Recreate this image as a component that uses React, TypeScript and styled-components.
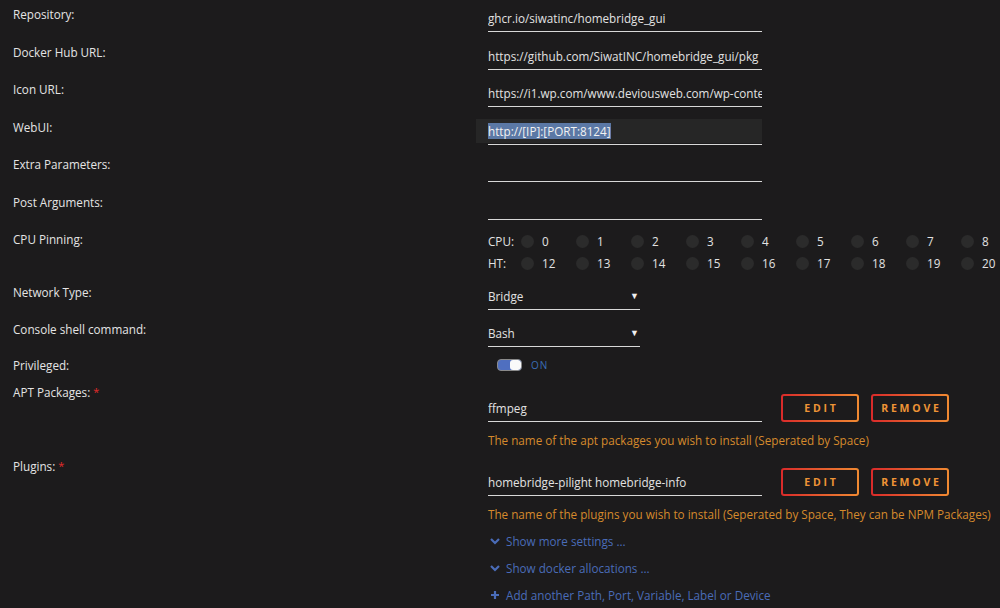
import React from 'react';
import styled, { createGlobalStyle, css } from 'styled-components';

const GlobalStyle = createGlobalStyle`
  html, body {
    margin: 0;
    padding: 0;
    background: #1c1b1c;
  }
  body {
    font-family: "Open Sans", "Noto Sans", sans-serif;
    font-size: 11.7px;
    color: #e2e2e2;
    overflow: hidden;
  }
`;

const Page = styled.div`
  width: 1000px;
  height: 608px;
  padding: 5px 0 0 13px;
  box-sizing: border-box;
  overflow: hidden;
`;

type RowProps = { gap?: number };
const Row = styled.div<RowProps>`
  display: flex;
  align-items: flex-start;
  margin-bottom: ${({ gap }) => (gap === undefined ? 10.5 : gap)}px;
`;

const Label = styled.div`
  width: 475px;
  flex: none;
  line-height: 18px;
  color: #e4e4e4;
`;

const Req = styled.span`
  color: #e22b2b;
  font-size: 11px;
  margin-left: 3px;
  vertical-align: top;
`;

type ValueProps = { top?: number };
const Value = styled.div<ValueProps>`
  flex: 1;
  min-width: 0;
  padding-top: ${({ top }) => top || 0}px;
`;

type InputProps = { focused?: boolean; w?: number };
const Input = styled.div<InputProps>`
  position: relative;
  width: ${({ w }) => w || 274}px;
  height: 27px;
  padding-top: 4px;
  box-sizing: border-box;
  line-height: 18px;
  border-bottom: 1px solid #d8d8d8;
  white-space: nowrap;
  color: #e2e2e2;
  ${({ focused }) =>
    focused &&
    css`
      &::before {
        content: '';
        position: absolute;
        left: -12px;
        right: 0;
        top: 1px;
        bottom: 1px;
        background: #262626;
      }
    `}
`;

const Clip = styled.span`
  position: relative;
  display: block;
  overflow: hidden;
`;

const Selected = styled.span`
  background: #5b78a5;
  color: #f2f2f2;
`;

const Select = styled(Input)`
  width: 152px;
  display: flex;
  justify-content: space-between;
  padding-right: 1px;
`;

const Caret = styled.span`
  font-size: 9px;
  color: #f0f0f0;
`;

const PinGrid = styled.div`
  display: flex;
  flex-direction: column;
`;

const PinRow = styled.div`
  display: flex;
  align-items: center;
  height: 22px;
`;

const PinHead = styled.span`
  width: 33px;
  flex: none;
`;

const Pin = styled.span`
  width: 55px;
  flex: none;
  display: flex;
  align-items: center;
  gap: 8px;
`;

const Dot = styled.span`
  width: 13px;
  height: 13px;
  border-radius: 50%;
  background: #2b2b2b;
  flex: none;
`;

const SwitchWrap = styled.div`
  display: flex;
  align-items: center;
  gap: 9px;
  height: 18px;
  padding-left: 9px;
`;

const Switch = styled.span`
  width: 25px;
  height: 12px;
  border-radius: 4px;
  background: #4f6fc0;
  border: 1px solid #8a8a8a;
  box-sizing: border-box;
  display: flex;
  justify-content: flex-end;
  overflow: hidden;
`;

const Knob = styled.span`
  width: 11px;
  height: 100%;
  background: #fafafa;
  border-radius: 3px;
`;

const SwitchText = styled.span`
  color: #3a6db4;
  font-size: 10px;
  letter-spacing: 1px;
`;

const FieldLine = styled.div`
  display: flex;
  align-items: flex-start;
`;

const Buttons = styled.div`
  display: flex;
  gap: 12px;
  margin-left: 19px;
  margin-top: -1px;
`;

const Button = styled.button`
  width: 78px;
  height: 28px;
  border: 2px solid transparent;
  border-radius: 3px;
  background:
    linear-gradient(#1c1b1c, #1c1b1c) padding-box,
    linear-gradient(90deg, #d92a2a, #f08a32) border-box;
  color: #ee9436;
  font-family: "Open Sans", "Noto Sans", sans-serif;
  font-size: 10.5px;
  font-weight: 700;
  letter-spacing: 2.8px;
  padding: 0 0 0 3px;
  cursor: pointer;
`;

const Hint = styled.div`
  color: #d58a2c;
  line-height: 18px;
  margin-top: 9px;
  white-space: nowrap;
`;

const Links = styled.div`
  display: flex;
  flex-direction: column;
  gap: 9px;
  padding-left: 475px;
  margin-top: 9px;
`;

const Link = styled.a`
  display: flex;
  align-items: center;
  gap: 6px;
  line-height: 18px;
  color: #4a6cb8;
  text-decoration: none;
  padding-left: 2px;
  svg {
    flex: none;
  }
`;

const Chevron = () => (
  <svg width="10" height="8" viewBox="0 0 10 8">
    <path d="M1 2 L5 6 L9 2" stroke="#4a6cb8" strokeWidth="2.2" fill="none" />
  </svg>
);

const Plus = () => (
  <svg width="10" height="10" viewBox="0 0 10 10">
    <path d="M5 1 V9 M1 5 H9" stroke="#4a6cb8" strokeWidth="2.2" fill="none" />
  </svg>
);

const textFields = [
  { label: 'Repository:', value: 'ghcr.io/siwatinc/homebridge_gui' },
  { label: 'Docker Hub URL:', value: 'https://github.com/SiwatINC/homebridge_gui/pkg' },
  { label: 'Icon URL:', value: 'https://i1.wp.com/www.deviousweb.com/wp-conte' },
];

const cpus = [0, 1, 2, 3, 4, 5, 6, 7, 8];
const hts = [12, 13, 14, 15, 16, 17, 18, 19, 20];

export default function App() {
  return (
    <Page>
      <GlobalStyle />
      {textFields.map((f) => (
        <Row key={f.label}>
          <Label>{f.label}</Label>
          <Value>
            <Input>
              <Clip>{f.value}</Clip>
            </Input>
          </Value>
        </Row>
      ))}
      <Row>
        <Label>WebUI:</Label>
        <Value>
          <Input focused>
            <Clip>
              <Selected>http://[IP]:[PORT:8124]</Selected>
            </Clip>
          </Input>
        </Value>
      </Row>
      <Row>
        <Label>Extra Parameters:</Label>
        <Value>
          <Input />
        </Value>
      </Row>
      <Row>
        <Label>Post Arguments:</Label>
        <Value>
          <Input />
        </Value>
      </Row>
      <Row gap={9}>
        <Label>CPU Pinning:</Label>
        <Value>
          <PinGrid>
            <PinRow>
              <PinHead>CPU:</PinHead>
              {cpus.map((n) => (
                <Pin key={n}>
                  <Dot />
                  {n}
                </Pin>
              ))}
            </PinRow>
            <PinRow>
              <PinHead>HT:</PinHead>
              {hts.map((n) => (
                <Pin key={n}>
                  <Dot />
                  {n}
                </Pin>
              ))}
            </PinRow>
          </PinGrid>
        </Value>
      </Row>
      <Row gap={10}>
        <Label>Network Type:</Label>
        <Value>
          <Select>
            Bridge<Caret>▼</Caret>
          </Select>
        </Value>
      </Row>
      <Row gap={9}>
        <Label>Console shell command:</Label>
        <Value>
          <Select>
            Bash<Caret>▼</Caret>
          </Select>
        </Value>
      </Row>
      <Row gap={9}>
        <Label>Privileged:</Label>
        <Value>
          <SwitchWrap>
            <Switch>
              <Knob />
            </Switch>
            <SwitchText>ON</SwitchText>
          </SwitchWrap>
        </Value>
      </Row>
      <Row gap={8}>
        <Label>
          APT Packages:<Req>*</Req>
        </Label>
        <Value top={12}>
          <FieldLine>
            <Input>
              <Clip>ffmpeg</Clip>
            </Input>
            <Buttons>
              <Button>EDIT</Button>
              <Button>REMOVE</Button>
            </Buttons>
          </FieldLine>
          <Hint>The name of the apt packages you wish to install (Seperated by Space)</Hint>
        </Value>
      </Row>
      <Row gap={0}>
        <Label>
          Plugins:<Req>*</Req>
        </Label>
        <Value top={12}>
          <FieldLine>
            <Input>
              <Clip>homebridge-pilight homebridge-info</Clip>
            </Input>
            <Buttons>
              <Button>EDIT</Button>
              <Button>REMOVE</Button>
            </Buttons>
          </FieldLine>
          <Hint>
            The name of the plugins you wish to install (Seperated by Space, They can be NPM Packages)
          </Hint>
        </Value>
      </Row>
      <Links>
        <Link href="#">
          <Chevron />
          Show more settings ...
        </Link>
        <Link href="#">
          <Chevron />
          Show docker allocations ...
        </Link>
        <Link href="#">
          <Plus />
          Add another Path, Port, Variable, Label or Device
        </Link>
      </Links>
    </Page>
  );
}
